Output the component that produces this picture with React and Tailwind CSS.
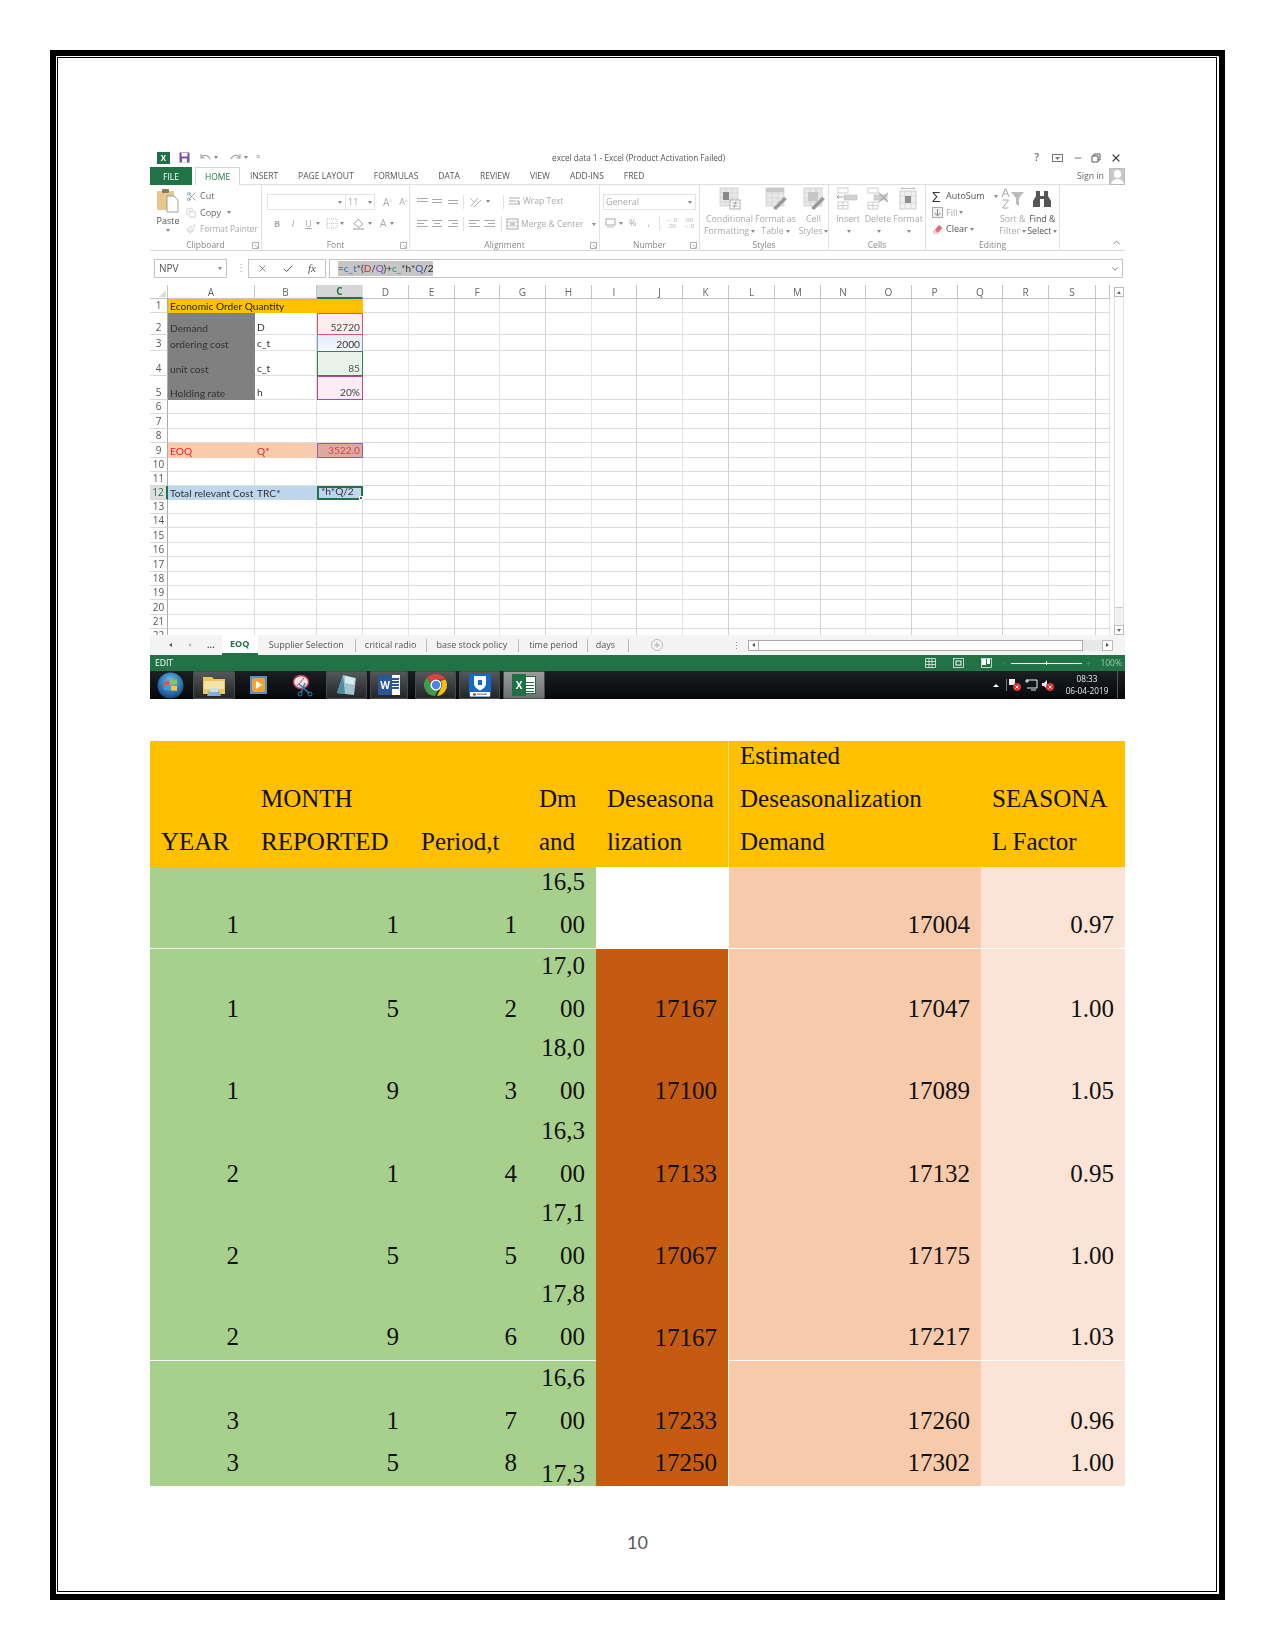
import React from "react";
import { Scissors, Copy, Paintbrush, X, Check, ChevronDown, ChevronUp, Minus, Plus } from "lucide-react";

const Caret = ({ className = "" }) => <span className={"inline-block w-0 h-0 border-x-[2.5px] border-x-transparent border-t-[3px] border-t-[#888] " + className} />;

const Launcher = () => (
  <svg width="7" height="7" viewBox="0 0 7 7" className="shrink-0"><path d="M0.5 0.5H6.5V6.5H0.5Z M3 3L6 6" fill="none" stroke="#999" strokeWidth="0.8" /></svg>
);

const Lines = ({ w = 12, rows = [12, 12, 12], color = "#aaa", align = "left" }) => (
  <svg width={w} height="10" viewBox={`0 0 ${w} 10`}>
    {rows.map((r, i) => <rect key={i} x={align === "center" ? (w - r) / 2 : align === "right" ? w - r : 0} y={1 + i * 3} width={r} height="1" fill={color} />)}
  </svg>
);

const Group = ({ w, label, launcher, children }) => (
  <div className={"flex flex-col h-[65px] border-r border-[#e2e2e2] " + w}>
    <div className="flex-1 min-h-0 relative">{children}</div>
    <div className="h-[9px] flex items-center relative">
      <div className="w-full text-center text-[8.5px] leading-none text-[#888]">{label}</div>
      {launcher && <div className="absolute right-[2px] top-[1px]"><Launcher /></div>}
    </div>
  </div>
);

const BigBtn = ({ w, icon, lines, arrow }) => (
  <div className={"flex flex-col items-center shrink-0 " + w}>
    <div className="h-[26px] flex items-center justify-center">{icon}</div>
    <div className="text-[8.8px] leading-[11.5px] mt-[2px] text-center text-[#aaa] whitespace-nowrap">{lines[0]}</div>
    <div className="text-[8.8px] leading-[11.5px] text-center text-[#aaa] whitespace-nowrap">{lines[1]}{arrow && <Caret className="ml-[2px] mb-[1px]" />}</div>
  </div>
);

const TableIcon = ({ kind }) => (
  <svg width="24" height="24" viewBox="0 0 24 24">
    <rect x="2" y="1" width="18" height="18" fill="#e9e9e9" stroke="#c8c8c8" strokeWidth="0.7" />
    <path d="M2 6H20M2 11H20M2 15H20M8 1V19M14 1V19" stroke="#d0d0d0" strokeWidth="0.7" />
    {kind === 0 && <><rect x="5" y="5" width="6" height="8" fill="#8a8a8a" /><rect x="12" y="13" width="10" height="9" fill="#fff" stroke="#999" strokeWidth="0.8" /><path d="M14 16H20M14 19H20M18 14L16 21" stroke="#888" strokeWidth="0.7" /></>}
    {kind === 1 && <><rect x="2" y="1" width="18" height="4" fill="#c8c8c8" /><path d="M9 21L20 10L23 12L12 23Z" fill="#999" /></>}
    {kind === 2 && <><rect x="6" y="5" width="10" height="9" fill="#c6c6c6" /><path d="M9 21L20 10L23 12L12 23Z" fill="#999" /></>}
  </svg>
);

const CellIcon = ({ kind }) => (
  <svg width="24" height="24" viewBox="0 0 24 24">
    {kind !== 2 && <><rect x="2" y="1" width="10" height="5" fill="none" stroke="#c2c2c2" strokeWidth="0.8" /><rect x="2" y="15" width="10" height="7" fill="none" stroke="#c2c2c2" strokeWidth="0.8" /><path d="M7 15V22M2 18.5H12" stroke="#c2c2c2" strokeWidth="0.8" /><rect x="8" y="8" width="13" height="5" fill="#d2d2d2" stroke="#bdbdbd" strokeWidth="0.6" /></>}
    {kind === 0 && <path d="M1 10H7M3 8L1 10L3 12" fill="none" stroke="#999" strokeWidth="0.9" />}
    {kind === 1 && <path d="M13 6L22 15M22 6L13 15" stroke="#aaa" strokeWidth="1.2" />}
    {kind === 2 && <><rect x="4" y="4" width="16" height="18" fill="#f1f1f1" stroke="#c2c2c2" strokeWidth="0.8" /><path d="M4 9H20M4 16H20M9 4V22M15 4V22" stroke="#cfcfcf" strokeWidth="0.7" /><rect x="9" y="9" width="6" height="7" fill="#8f8f8f" /><path d="M5 1.5H19M5 1.5L7 .5M19 1.5L17 .5" stroke="#aaa" strokeWidth="0.7" /></>}
  </svg>
);

const Ribbon = () => (
  <div className="flex h-[66px] border-b border-[#d9d9d9] font-['Open_Sans',sans-serif]">
    <Group w="w-[112px]" label="Clipboard" launcher>
      <div className="flex pt-[3px]">
        <div className="w-[36px] flex flex-col items-center">
          <svg width="24" height="25" viewBox="0 0 24 25">
            <rect x="1" y="3" width="17" height="19" rx="1" fill="#e9c98b" />
            <rect x="6" y="1" width="7" height="4" rx="1" fill="#8b7a5c" />
            <path d="M11 8H18L22 12V24H11Z" fill="#fff" stroke="#888" strokeWidth="0.8" />
          </svg>
          <div className="text-[9px] leading-[11px] text-[#555] mt-[2px]">Paste</div>
          <Caret className="mt-[3px]" />
        </div>
        <div className="flex flex-col text-[9px] leading-[16.5px] text-[#666]">
          <div className="flex items-center h-[16.5px]"><Scissors size={11} strokeWidth={1.3} color="#5b7290" className="mr-[3px]" />Cut</div>
          <div className="flex items-center h-[16.5px]"><Copy size={10} strokeWidth={1.1} color="#999" className="mr-[4px]" />Copy<Caret className="ml-[6px]" /></div>
          <div className="flex items-center h-[16.5px] text-[8.3px] text-[#aaa] whitespace-nowrap"><Paintbrush size={10} strokeWidth={1.2} color="#aaa" className="mr-[4px]" />Format Painter</div>
        </div>
      </div>
    </Group>
    <Group w="w-[148px]" label="Font" launcher>
      <div className="pl-[5px] pt-[9px] flex items-center gap-[0px]">
        <div className="w-[79px] h-[16px] border border-[#e4e4e4] flex items-center justify-end pr-[3px]"><Caret /></div>
        <div className="w-[29px] h-[16px] border border-l-0 border-[#e4e4e4] flex items-center justify-between px-[2px] text-[9px] text-[#aaa]">11<Caret /></div>
        <span className="ml-[8px] text-[10px] text-[#aaa]">A<sup className="text-[5px]">^</sup></span>
        <span className="ml-[7px] text-[9px] text-[#aaa]">A<sup className="text-[5px]">^</sup></span>
      </div>
      <div className="pl-[7px] pt-[6px] flex items-center text-[9px] text-[#aaa]">
        <b className="w-[16px] text-center">B</b>
        <i className="w-[16px] text-center">I</i>
        <u className="w-[15px] text-center">U</u>
        <Caret className="mr-[6px]" />
        <svg width="12" height="11" viewBox="0 0 12 11"><rect x="1" y="1" width="10" height="9" fill="none" stroke="#bbb" strokeDasharray="1 1" /><path d="M6 1V10M1 5.5H11" stroke="#ccc" strokeDasharray="1 1" /></svg>
        <Caret className="ml-[2px] mr-[8px]" />
        <svg width="13" height="12" viewBox="0 0 13 12"><path d="M6 1L11 6L7 9.5L2 6Z" fill="none" stroke="#aaa" /><rect x="1" y="10" width="11" height="2" fill="#ccc" /></svg>
        <Caret className="ml-[3px] mr-[8px]" />
        <span className="text-[10px]">A</span>
        <Caret className="ml-[4px]" />
      </div>
    </Group>
    <Group w="w-[190px]" label="Alignment" launcher>
      <div className="pl-[7px] pt-[9px] flex items-center">
        <Lines w={11} rows={[11, 11, 0]} />
        <div className="w-[4px]" />
        <div className="mt-[2px]"><Lines w={10} rows={[10, 10, 0]} /></div>
        <div className="w-[6px]" />
        <div className="mt-[5px]"><Lines w={10} rows={[10, 10, 0]} /></div>
        <div className="w-[1px] h-[14px] bg-[#e2e2e2] mx-[5px]" />
        <svg width="14" height="12" viewBox="0 0 14 12"><path d="M2 10L9 2M5 11L12 4" stroke="#aaa" strokeWidth="1" /><path d="M1 2L5 6" stroke="#c0c0c0" /></svg>
        <Caret className="ml-[3px]" />
        <div className="w-[1px] h-[14px] bg-[#e2e2e2] ml-[13px] mr-[4px]" />
        <svg width="13" height="12" viewBox="0 0 13 12"><path d="M1 2H12M1 5H8M1 8H12" stroke="#aaa" /><path d="M9 5H11V8" fill="none" stroke="#999" /></svg>
        <span className="ml-[2px] text-[8.5px] text-[#aaa]">Wrap Text</span>
      </div>
      <div className="pl-[7px] pt-[8px] flex items-center">
        <Lines w={11} rows={[11, 7, 11]} />
        <div className="w-[4px]" />
        <Lines w={10} rows={[10, 6, 10]} align="center" />
        <div className="w-[6px]" />
        <Lines w={10} rows={[10, 6, 10]} align="right" />
        <div className="w-[1px] h-[14px] bg-[#e2e2e2] mx-[5px]" />
        <Lines w={11} rows={[11, 7, 11]} />
        <div className="w-[4px]" />
        <Lines w={11} rows={[11, 7, 11]} align="right" />
        <div className="w-[1px] h-[14px] bg-[#e2e2e2] ml-[6px] mr-[4px]" />
        <svg width="13" height="12" viewBox="0 0 13 12"><rect x="1" y="1" width="11" height="10" fill="none" stroke="#aaa" /><path d="M1 4H12M1 8H12" stroke="#bbb" /><path d="M4 6H9" stroke="#888" /></svg>
        <span className="ml-[2px] text-[8.5px] text-[#aaa] whitespace-nowrap">Merge &amp; Center</span>
        <Caret className="ml-[8px]" />
      </div>
    </Group>
    <Group w="w-[100px]" label="Number" launcher>
      <div className="pl-[3px] pt-[9px]">
        <div className="w-[93px] h-[16px] border border-[#e4e4e4] flex items-center justify-between pl-[2px] pr-[3px] text-[9px] text-[#aaa]">General<Caret /></div>
      </div>
      <div className="pl-[5px] pt-[6px] flex items-center text-[9px] text-[#aaa]">
        <svg width="11" height="11" viewBox="0 0 11 11"><rect x="1" y="1" width="9" height="6" fill="none" stroke="#aaa" /><path d="M2 9H9" stroke="#bbb" /></svg>
        <Caret className="ml-[3px] mr-[6px]" />
        <span>%</span>
        <span className="ml-[11px]">,</span>
        <div className="w-[1px] h-[14px] bg-[#e2e2e2] ml-[9px] mr-[5px]" />
        <span className="text-[6px] leading-[6px] w-[14px] text-center">←.0<br />.00</span>
        <span className="text-[6px] leading-[6px] w-[14px] text-center ml-[3px]">.00<br />→.0</span>
      </div>
    </Group>
    <Group w="w-[129px]" label="Styles">
      <div className="flex pl-[6px] pt-[1px]">
        <BigBtn w="w-[47px]" icon={<TableIcon kind={0} />} lines={["Conditional", "Formatting"]} arrow />
        <BigBtn w="w-[45px]" icon={<TableIcon kind={1} />} lines={["Format as", "Table"]} arrow />
        <BigBtn w="w-[31px]" icon={<TableIcon kind={2} />} lines={["Cell", "Styles"]} arrow />
      </div>
    </Group>
    <Group w="w-[97px]" label="Cells">
      <div className="flex pl-[4px] pt-[1px]">
        <BigBtn w="w-[30px]" icon={<CellIcon kind={0} />} lines={["Insert", ""]} arrow />
        <BigBtn w="w-[30px]" icon={<CellIcon kind={1} />} lines={["Delete", ""]} arrow />
        <BigBtn w="w-[30px]" icon={<CellIcon kind={2} />} lines={["Format", ""]} arrow />
      </div>
    </Group>
    <Group w="w-[134px]" label="Editing">
      <div className="flex pl-[6px] pt-[3px]">
        <div className="w-[69px] flex flex-col text-[9px] leading-[16.5px]">
          <div className="flex items-center h-[16.5px] text-[#555]"><span className="w-[14px] text-[15px] leading-none text-[#333]">Σ</span>AutoSum<Caret className="ml-[9px]" /></div>
          <div className="flex items-center h-[16.5px] text-[#aaa]"><span className="w-[14px]"><svg width="11" height="11" viewBox="0 0 11 11"><rect x="0.5" y="0.5" width="10" height="10" fill="#eee" stroke="#aaa" /><path d="M5.5 2V8M3 6L5.5 9L8 6" fill="none" stroke="#888" /></svg></span>Fill<Caret className="ml-[2px]" /></div>
          <div className="flex items-center h-[16.5px] text-[#555]"><span className="w-[14px]"><svg width="11" height="11" viewBox="0 0 11 11"><path d="M1 8L7 1L10.5 4L5 10H2Z" fill="#e8697a" /><path d="M1 8L3 6L6 9L5 10H2Z" fill="#f4d0d4" /></svg></span>Clear<Caret className="ml-[2px]" /></div>
        </div>
        <div className="flex flex-col items-center w-[26px] -mt-[2px]">
          <div className="h-[25px] flex items-center">
            <svg width="24" height="22" viewBox="0 0 24 22"><path d="M1 9L4 1H5L8 9M2.2 6H6.8M1.5 12H7.5L1.5 20H7.5" fill="none" stroke="#aaa" strokeWidth="1" /><path d="M10 4H23L18 10V18L15 16V10Z" fill="#bbb" /></svg>
          </div>
          <div className="text-[8.8px] leading-[11.5px] text-[#aaa] whitespace-nowrap mt-[3px]">Sort &amp;</div>
          <div className="text-[8.8px] leading-[11.5px] text-[#aaa] whitespace-nowrap">Filter<Caret className="ml-[2px] mb-[1px]" /></div>
        </div>
        <div className="flex flex-col items-center w-[34px] -mt-[2px]">
          <div className="h-[25px] flex items-center">
            <svg width="20" height="18" viewBox="0 0 20 18"><path d="M4 1H8V6H12V1H16V6L19 11V17H12V9H8V17H1V11L4 6Z" fill="#555" /></svg>
          </div>
          <div className="text-[8.8px] leading-[11.5px] text-[#555] whitespace-nowrap mt-[3px]">Find &amp;</div>
          <div className="text-[8.8px] leading-[11.5px] text-[#555] whitespace-nowrap">Select<Caret className="ml-[2px] mb-[1px] border-t-[#555]" /></div>
        </div>
      </div>
    </Group>
    <div className="flex-1 flex items-end justify-end pr-[3px] pb-[2px]"><ChevronUp size={11} color="#777" strokeWidth={2} /></div>
  </div>
);

const colLetters = ["A", "B", "C", "D", "E", "F", "G", "H", "I", "J", "K", "L", "M", "N", "O", "P", "Q", "R", "S", ""];

const rowHeights = [14, 22, 16, 25, 24, 14, 15, 14, 15, 14, 14, 14, 14, 14.4, 14.4, 14.4, 14.4, 14.4, 14.4, 14.4, 14.4, 7];

const cellStyles = {
  "2A": "bg-[#808080]", "3A": "bg-[#808080]", "4A": "bg-[#808080]", "5A": "bg-[#808080]",
  "2C": "bg-[#fcecec] border border-[#cf5a72] justify-end text-[#444]",
  "3C": "bg-gradient-to-b from-[#e3ecf8] to-[#f5f8fc] border-x border-[#6f9fd8] justify-end text-[#333]",
  "4C": "bg-[#e9f2e9] border border-[#2f8452] justify-end text-[#555]",
  "5C": "bg-[#fbecf3] border border-[#b14a8e] justify-end text-[#444]",
  "9A": "bg-[#f8cbad] text-[#e8202a]", "9B": "bg-[#f8cbad] text-[#e8202a]",
  "9C": "bg-[#dcaaa0] border border-[#8a62b4] justify-end text-[#e0404a]",
  "12A": "bg-[#bdd7ee] whitespace-nowrap", "12B": "bg-[#bdd7ee]",
  "12C": "bg-[#bdd7ee] border-2 border-[#217346] items-center",
};
const cellText = {
  "2A": "Demand", "2B": "D", "2C": "52720", "3A": "ordering cost", "3B": "c_t", "3C": "2000",
  "4A": "unit cost", "4B": "c_t", "4C": "85", "5A": "Holding rate", "5B": "h", "5C": "20%",
  "9A": "EOQ", "9B": "Q*", "9C": "3522.0", "12A": "Total relevant Cost", "12B": "TRC*", "12C": "*h*Q/2",
};

const Sheet = () => (
  <div className="w-[961px] h-[350px] overflow-hidden grid content-start grid-cols-[18px_87px_62px_46px_46px_46px_45px_46px_46px_45px_46px_46px_46px_46px_45px_46px_46px_45px_46px_47px_14px] font-['Lato',sans-serif] text-[10.2px] text-[#333]">
    <div className="h-[14px] border-b border-r border-[#c4c4c4] flex items-end justify-end pr-[1px] pb-[1px]">
      <div className="w-0 h-0 border-l-[7px] border-l-transparent border-b-[7px] border-b-[#dcdcdc]" />
    </div>
    {colLetters.map((c, i) => (
      <div key={i} className={"h-[14px] flex items-center justify-center border-r border-b text-[10px] leading-none font-['Open_Sans',sans-serif] " + (c === "C" ? "bg-[#d6d6d6] border-b-[#217346] border-b-2 text-[#217346] font-bold border-r-[#e0e0e0]" : "border-[#c4c4c4] text-[#666]")}>{c}</div>
    ))}
    {rowHeights.map((h, ri) => {
      const r = ri + 1;
      const heightClass = {
        14: "h-[14px]", 22: "h-[22px]", 16: "h-[16px]", 25: "h-[25px]", 24: "h-[24px]", 15: "h-[15px]", 14.4: "h-[14.4px]", 7: "h-[7px]",
      }[h];
      return (
        <React.Fragment key={r}>
          <div className={"flex justify-center border-r border-[#aaa] border-b text-[10px] leading-[13px] font-['Open_Sans',sans-serif] overflow-hidden " + (r === 22 ? "items-start " : "items-end ") + heightClass + " " + (r === 12 ? "bg-[#dedede] text-[#217346] border-r-[#217346] border-r-2 border-b-[#d8d8d8]" : "border-b-[#d8d8d8] text-[#555]")}>{r}</div>
          {r === 1 ? (
            <div className={"col-span-3 bg-[#ffc000] flex items-end pl-[2px] leading-[13px] text-[#222] whitespace-nowrap " + heightClass}>Economic Order Quantity</div>
          ) : (
            ["A", "B", "C"].map((c) => {
              const k = r + c;
              return <div key={k} className={"relative flex items-end px-[2px] leading-[13px] overflow-visible " + heightClass + " " + (cellStyles[k] || "border-r border-b border-[#dedede]")}>
                {cellText[k]}
                {k === "12C" && <span className="absolute -right-[2px] -bottom-[2px] w-[4px] h-[4px] bg-[#217346] border border-white" />}
              </div>;
            })
          )}
          {colLetters.slice(3).map((c, ci) => (
            <div key={ci} className={"border-r border-b " + heightClass + " " + (ci % 2 === 1 ? "border-r-[#d2d2d2] border-b-[#dcdcdc]" : "border-r-[#e4e4e4] border-b-[#dcdcdc]")} />
          ))}
        </React.Fragment>
      );
    })}
  </div>
);

const TaskBtn = ({ w, ml, light, children }) => (
  <div className={"h-[28px] flex items-center justify-center shrink-0 rounded-[1px] border border-[#4a4a4a] " + w + " " + ml + " " + (light ? "bg-gradient-to-b from-[#9a9c9c] to-[#6d6f70]" : "bg-gradient-to-b from-[#55585a] to-[#232528]")}>{children}</div>
);

const Taskbar = () => (
  <div className="h-[28px] flex items-center bg-gradient-to-b from-[#1d2022] to-[#05080b]">
    <div className="w-[40px] h-[28px] flex items-center justify-center shrink-0">
      <svg width="27" height="27" viewBox="0 0 27 27">
        <defs><radialGradient id="orb" cx="50%" cy="35%" r="70%"><stop offset="0" stopColor="#7fc1ea" /><stop offset="0.6" stopColor="#2a73b5" /><stop offset="1" stopColor="#123a68" /></radialGradient></defs>
        <circle cx="13.5" cy="13.5" r="13" fill="url(#orb)" />
        <path d="M7 9.5L12.5 8.5V12.7L7 13.2Z" fill="#e2553d" /><path d="M14 8.3L20 7.5V12.3L14 12.7Z" fill="#8ec641" /><path d="M7 14.5L12.5 14V18.5L7 17.8Z" fill="#3f9be0" /><path d="M14 14L20 13.7V18.8L14 18.5Z" fill="#f8c73c" />
      </svg>
    </div>
    <TaskBtn w="w-[42px]" ml="ml-[3px]">
      <svg width="26" height="23" viewBox="0 0 26 23"><path d="M2 3H11L13 5H24V20H2Z" fill="#e8c860" /><rect x="3" y="7" width="20" height="8" fill="#f4e3a4" /><path d="M8 17H18L20 22H6Z" fill="#7fb2d6" /><rect x="9" y="14" width="8" height="4" fill="#c9dfee" /></svg>
    </TaskBtn>
    <div className="w-[46px] flex justify-center shrink-0">
      <svg width="19" height="20" viewBox="0 0 19 20"><rect x="1" y="1" width="17" height="18" fill="#5a8fc4" /><rect x="3" y="3" width="13" height="14" rx="2" fill="#f1a33a" /><path d="M7 6L13 10L7 14Z" fill="#fff" /></svg>
    </div>
    <div className="w-[44px] flex justify-center shrink-0">
      <svg width="22" height="23" viewBox="0 0 22 23"><ellipse cx="9" cy="8" rx="7.5" ry="6.5" fill="#f0e8e8" stroke="#c33b52" strokeWidth="1.4" /><path d="M5 12L12 4" stroke="#c33b52" strokeWidth="1" /><path d="M7 10L17 19M13 9L9 19" stroke="#2f7fb4" strokeWidth="1.6" /><circle cx="18" cy="20" r="2" fill="none" stroke="#2f7fb4" /><circle cx="8" cy="20" r="2" fill="none" stroke="#2f7fb4" /></svg>
    </div>
    <TaskBtn w="w-[41px]" ml="ml-[1px]">
      <svg width="26" height="24" viewBox="0 0 26 24"><path d="M9 2L22 5L20 22L3 20Z" fill="#9ec5d0" /><path d="M9 2L3 20L11 21Z" fill="#4d8ea0" /><path d="M11 3L21 5.5L20 12L11 10Z" fill="#d9eaee" /></svg>
    </TaskBtn>
    <TaskBtn w="w-[38px]" ml="ml-[3px]">
      <div className="relative w-[22px] h-[20px]">
        <div className="absolute right-0 top-0 w-[11px] h-[20px] bg-white flex flex-col gap-[1.5px] p-[1.5px] pt-[3px]">
          <div className="h-[1.5px] bg-[#2b579a]" /><div className="h-[1.5px] bg-[#2b579a]" /><div className="h-[1.5px] bg-[#2b579a]" /><div className="h-[1.5px] bg-[#2b579a]" />
        </div>
        <div className="absolute left-0 top-0 w-[14px] h-[20px] bg-[#2b579a] text-white text-[10px] font-bold leading-[20px] text-center font-['Open_Sans',sans-serif]">W</div>
      </div>
    </TaskBtn>
    <TaskBtn w="w-[41px]" ml="ml-[7px]">
      <svg width="24" height="24" viewBox="0 0 24 24">
        <path d="M12 1A11 11 0 0 1 21.5 6.5H12A5.5 5.5 0 0 0 6.8 10L3 4.5A11 11 0 0 1 12 1Z" fill="#db4437" />
        <path d="M21.5 6.5A11 11 0 0 1 13 23L17 15A5.5 5.5 0 0 0 16.5 8Z" fill="#f4c20d" />
        <path d="M3 4.5L8 13A5.5 5.5 0 0 0 14 17L11 23A11 11 0 0 1 3 4.5Z" fill="#3f9c4b" />
        <circle cx="12" cy="12" r="5.5" fill="#fff" /><circle cx="12" cy="12" r="4.2" fill="#4a84e8" />
      </svg>
    </TaskBtn>
    <TaskBtn w="w-[41px]" ml="ml-[3px]">
      <svg width="24" height="25" viewBox="0 0 24 25"><rect x="1" y="1" width="22" height="23" rx="3" fill="#1569c7" /><path d="M6 3H18V10C18 14 15 16 12 17.5C9 16 6 14 6 10Z" fill="#fff" /><rect x="10" y="7" width="4" height="5" fill="#1569c7" /><rect x="2" y="19" width="20" height="4.5" fill="#fff" /><rect x="5" y="20.5" width="3" height="2" fill="#c62828" /><rect x="9" y="20.5" width="10" height="1.5" fill="#999" /></svg>
    </TaskBtn>
    <TaskBtn w="w-[42px]" ml="ml-[3px]" light>
      <div className="relative w-[24px] h-[22px]">
        <div className="absolute right-0 top-[2px] w-[12px] h-[18px] bg-white border border-[#1e6b3f]" >
          <div className="mt-[3px] h-[12px] mx-[1px] bg-[repeating-linear-gradient(0deg,#1e6b3f_0,#1e6b3f_1px,transparent_1px,transparent_3px)]" />
        </div>
        <div className="absolute left-0 top-0 w-[14px] h-[22px] bg-[#1e7145] text-white text-[10px] font-bold leading-[22px] text-center font-['Open_Sans',sans-serif]">X</div>
      </div>
    </TaskBtn>
    <div className="flex-1" />
    <div className="w-0 h-0 border-x-[3px] border-x-transparent border-b-[3px] border-b-white mr-[7px]" />
    <div className="w-[1px] h-[12px] bg-[#777] mr-[1px]" />
    <svg width="14" height="14" viewBox="0 0 14 14" className="mr-[2px]"><rect x="1" y="1" width="6" height="6" fill="#eee" /><circle cx="9" cy="9" r="4" fill="#d9352f" /><path d="M7.5 7.5L10.5 10.5M10.5 7.5L7.5 10.5" stroke="#fff" /></svg>
    <svg width="14" height="14" viewBox="0 0 14 14" className="mr-[3px]"><path d="M3 2H13V10H3M3 1V5M1 3H5M7 12H12" fill="none" stroke="#eee" /></svg>
    <svg width="14" height="14" viewBox="0 0 14 14" className="mr-[10px]"><path d="M1 5H3L6 2V11L3 8H1Z" fill="#eee" /><circle cx="9" cy="9" r="4" fill="#d9352f" /><path d="M7.5 7.5L10.5 10.5M10.5 7.5L7.5 10.5" stroke="#fff" /></svg>
    <div className="w-[44px] flex flex-col items-center text-[8.2px] leading-[12.5px] text-[#e8e8e8] font-['Open_Sans',sans-serif] whitespace-nowrap mr-[8px]">
      <div>08:33</div><div>06-04-2019</div>
    </div>
    <div className="w-[1px] h-[28px] bg-[#555] mr-[7px]" />
  </div>
);

const Excel = () => (
  <div className="w-[975px] h-[551px] overflow-hidden blur-[0.4px] font-['Open_Sans',sans-serif] bg-white">
    {/* title bar */}
    <div className="h-[19px] flex items-center text-[#666] relative">
      <div className="ml-[7px] w-[13px] h-[12px] bg-[#1e7145] text-white text-[8px] font-bold leading-[12px] text-center">X</div>
      <svg width="11" height="11" viewBox="0 0 11 11" className="ml-[9px]"><rect x="0.5" y="0.5" width="10" height="10" fill="#7b4f99" /><rect x="2.5" y="1" width="6" height="3.5" fill="#fff" /><rect x="3" y="6.5" width="5" height="4" fill="#fff" /></svg>
      <svg width="11" height="11" viewBox="0 0 11 11" className="ml-[10px]"><path d="M1 2V6H5M1.5 5.5C3 2.5 8 2.5 10 7" fill="none" stroke="#aaa" strokeWidth="1.2" /></svg>
      <Caret className="ml-[3px]" />
      <svg width="11" height="11" viewBox="0 0 11 11" className="ml-[12px]"><path d="M10 2V6H6M9.5 5.5C8 2.5 3 2.5 1 7" fill="none" stroke="#aaa" strokeWidth="1.2" /></svg>
      <Caret className="ml-[3px]" />
      <div className="ml-[8px] text-[7px] text-[#888]">≡</div>
      <div className="ml-[292px] mt-[2px] text-[8.2px] leading-none whitespace-nowrap text-[#555]">excel data 1 - Excel (Product Activation Failed)</div>
      <div className="flex-1" />
      <div className="text-[10px] font-semibold text-[#666] mr-[13px]">?</div>
      <svg width="11" height="8" viewBox="0 0 11 8" className="mr-[10px]"><rect x="0.5" y="0.5" width="10" height="7" fill="none" stroke="#777" /><path d="M3 3H8L5.5 6Z" fill="#777" /></svg>
      <Minus size={10} color="#555" className="mr-[8px]" />
      <svg width="10" height="10" viewBox="0 0 10 10" className="mr-[9px]"><path d="M3 3V1H9V7H7M1 3H7V9H1Z" fill="none" stroke="#555" /></svg>
      <X size={12} strokeWidth={2.4} color="#444" className="mr-[3px]" />
    </div>
    {/* tabs */}
    <div className="h-[18px] flex items-end text-[8.5px] text-[#555] relative">
      <div className="w-[42px] h-[18px] bg-[#217346] text-white flex items-center justify-center shrink-0 pt-[2px]">FILE</div>
      <div className="ml-[3px] w-[45px] h-[18px] border-x border-t border-[#d5d5d5] text-[#217346] flex items-center justify-center shrink-0 bg-white pt-[1px]">HOME</div>
      <div className="flex-1 h-[18px] border-b border-[#dedede] flex items-center whitespace-nowrap pt-[2px]">
        <span className="ml-[10px]">INSERT</span>
        <span className="ml-[20px]">PAGE LAYOUT</span>
        <span className="ml-[20px]">FORMULAS</span>
        <span className="ml-[20px]">DATA</span>
        <span className="ml-[20px]">REVIEW</span>
        <span className="ml-[20px]">VIEW</span>
        <span className="ml-[20px]">ADD-INS</span>
        <span className="ml-[20px]">FRED</span>
        <span className="ml-auto mr-[5px] text-[8.8px] text-[#666]">Sign in</span>
        <div className="w-[16px] h-[17px] bg-[#c8c8c8] border border-[#bbb] overflow-hidden relative">
          <div className="absolute left-[4px] top-[1px] w-[7px] h-[8px] rounded-full bg-white" />
          <div className="absolute left-[1px] top-[10px] w-[13px] h-[8px] rounded-t-md bg-white" />
        </div>
      </div>
    </div>
    <Ribbon />
    {/* formula bar */}
    <div className="h-[34px] pt-[8px] flex text-[10px] text-[#555]">
      <div className="ml-[4px] w-[73px] h-[19px] border border-[#c4c4c4] flex items-center justify-between pl-[4px] pr-[4px] shrink-0">NPV<Caret className="border-t-[#555]" /></div>
      <div className="ml-[7px] w-[14px] text-center text-[#aaa] leading-[17px]">⋮</div>
      <div className="w-[78px] h-[19px] border border-[#c4c4c4] flex items-center pl-[8px] gap-[14px] shrink-0">
        <X size={11} color="#666" strokeWidth={1.6} />
        <Check size={12} color="#666" strokeWidth={2} />
        <i className="font-['Liberation_Serif',serif] text-[11px] text-[#555]">fx</i>
      </div>
      <div className="ml-[3px] w-[794px] h-[19px] border border-[#c4c4c4] flex items-center pl-[8px] pr-[2px] text-[10px] font-['Lato',sans-serif]">
        <span className="bg-[#c6c6c6] h-[15px] leading-[15px] whitespace-nowrap"><span className="text-[#333]">=</span><span className="text-[#2a78b8]">c_t</span><span className="text-[#333]">*(</span><span className="text-[#c03030]">D</span><span className="text-[#333]">/</span><span className="text-[#7a4ab0]">Q</span><span className="text-[#333]">)+</span><span className="text-[#2a9060]">c_</span><span className="text-[#333]">*h*</span><span className="text-[#2a58b8]">Q</span><span className="text-[#222]">/2</span></span>
        <ChevronDown size={10} color="#666" strokeWidth={2} className="ml-auto" />
      </div>
    </div>
    {/* sheet + scrollbar */}
    <div className="flex h-[350px]">
      <Sheet />
      <div className="ml-[3px] w-[10px] flex flex-col">
        <div className="h-[2px]" />
        <div className="h-[10px] border border-[#bbb] flex items-center justify-center"><div className="w-0 h-0 border-x-[2.5px] border-x-transparent border-b-[3px] border-b-[#666]" /></div>
        <div className="flex-1 border-x border-[#e0e0e0] bg-[#f1f1f1]"><div className="h-[311px] bg-white border-b border-[#ccc]" /></div>
        <div className="h-[10px] border border-[#bbb] flex items-center justify-center"><div className="w-0 h-0 border-x-[2.5px] border-x-transparent border-t-[3px] border-t-[#666]" /></div>
      </div>
    </div>
    {/* sheet tabs */}
    <div className="h-[20px] bg-[#f4f4f4] flex items-center text-[9px] text-[#555] whitespace-nowrap">
      <div className="w-[582px] shrink-0 flex items-center">
        <div className="ml-[19px] w-0 h-0 border-y-[2.5px] border-y-transparent border-r-[3px] border-r-[#555]" />
        <div className="ml-[17px] w-0 h-0 border-y-[2.5px] border-y-transparent border-l-[3px] border-l-[#bbb]" />
        <span className="ml-[15px] font-bold">...</span>
        <div className="ml-[7px] w-[36px] h-[20px] bg-white text-[#217346] font-bold border-b-2 border-[#217346] flex items-center justify-center -mt-[1px]">EOQ</div>
        <span className="ml-[11px]">Supplier Selection</span>
        <div className="w-[1px] h-[13px] bg-[#bbb] ml-[11px] mr-[9px]" />
        <span>critical radio</span>
        <div className="w-[1px] h-[13px] bg-[#bbb] ml-[10px] mr-[9px]" />
        <span>base stock policy</span>
        <div className="w-[1px] h-[13px] bg-[#bbb] ml-[11px] mr-[10px]" />
        <span>time period</span>
        <div className="w-[1px] h-[13px] bg-[#bbb] ml-[9px] mr-[8px]" />
        <span>days</span>
        <div className="w-[1px] h-[13px] bg-[#bbb] ml-[13px]" />
        <div className="ml-[22px] w-[12px] h-[12px] rounded-full border border-[#bbb] flex items-center justify-center"><Plus size={8} color="#aaa" strokeWidth={3} /></div>
      </div>
      <span className="text-[#888] leading-none">⋮</span>
      <div className="ml-[7px] w-[11px] h-[11px] border border-[#aaa] flex items-center justify-center bg-white"><div className="w-0 h-0 border-y-[2.5px] border-y-transparent border-r-[3px] border-r-[#555]" /></div>
      <div className="w-[324px] h-[11px] border-y border-r border-[#aaa] bg-white" />
      <div className="w-[19px] h-[11px] bg-[#e8e8e8]" />
      <div className="w-[11px] h-[11px] border border-[#bbb] flex items-center justify-center bg-white"><div className="w-0 h-0 border-y-[2.5px] border-y-transparent border-l-[3px] border-l-[#555]" /></div>
    </div>
    {/* status bar */}
    <div className="h-[16px] bg-[#217346] flex items-center text-[8.5px] text-white">
      <span className="ml-[5px]">EDIT</span>
      <div className="flex-1" />
      <svg width="11" height="10" viewBox="0 0 11 10" className="mr-[17px]"><path d="M.5 .5H10.5V9.5H.5ZM.5 3.5H10.5M.5 6.5H10.5M4 .5V9.5M7 .5V9.5" fill="none" stroke="#fff" strokeWidth="0.7" /></svg>
      <svg width="11" height="10" viewBox="0 0 11 10" className="mr-[17px]"><rect x=".5" y=".5" width="10" height="9" fill="none" stroke="#fff" strokeWidth="0.7" /><rect x="3" y="3" width="5" height="4" fill="none" stroke="#fff" /></svg>
      <svg width="11" height="10" viewBox="0 0 11 10" className="mr-[9px]"><rect x=".5" y=".5" width="10" height="9" fill="none" stroke="#fff" strokeWidth="0.7" /><rect x="1" y="1" width="4" height="6" fill="#fff" /><rect x="6" y="1" width="3" height="5" fill="#fff" /></svg>
      <Minus size={6} color="#4f9a70" className="mr-[4px]" />
      <div className="w-[71px] h-[1px] bg-white relative"><div className="absolute left-[35px] -top-[1.5px] w-[1px] h-[4px] bg-white" /></div>
      <Plus size={7} color="#4f9a70" className="ml-[3px]" />
      <span className="ml-[8px] mr-[3px] text-[#9cc7af]">100%</span>
    </div>
    <Taskbar />
  </div>
);

const rows = [
  [1, 1, 1, "16,5", "00", "", 17004, "0.97"],
  [1, 5, 2, "17,0", "00", 17167, 17047, "1.00"],
  [1, 9, 3, "18,0", "00", 17100, 17089, "1.05"],
  [2, 1, 4, "16,3", "00", 17133, 17132, "0.95"],
  [2, 5, 5, "17,1", "00", 17067, 17175, "1.00"],
  [2, 9, 6, "17,8", "00", 17167, 17217, "1.03"],
  [3, 1, 7, "16,6", "00", 17233, 17260, "0.96"],
  [3, 5, 8, "17,3", "", 17250, 17302, "1.00"],
];

const Head = ({ lines, border }) => (
  <div className={"flex flex-col justify-end pb-[4px] pl-[11px] bg-[#ffc000] whitespace-nowrap " + (border ? "border-l border-[#ffe08a]" : "")}>
    {lines.map((l, i) => <div key={i}>{l}</div>)}
  </div>
);

const DataTable = () => (
  <div className="mt-[42px] w-[975px] grid grid-cols-[100px_160px_118px_68px_132px_253px_144px] grid-rows-[126px_repeat(7,82.4px)_42px] font-['Liberation_Serif',serif] text-[25px] leading-[43px] text-[#111]">
    <Head lines={["YEAR"]} />
    <Head lines={["MONTH", "REPORTED"]} />
    <Head lines={["Period,t"]} />
    <Head lines={["Dm", "and"]} />
    <Head lines={["Deseasona", "lization"]} />
    <Head lines={["Estimated", "Deseasonalization", "Demand"]} border />
    <Head lines={["SEASONA", "L Factor"]} />
    {rows.map((r, i) => {
      const last = i === 7;
      const line = i === 0 || i === 5 ? "border-b border-white " : "";
      const cell = "flex flex-col justify-end items-end px-[11px] pb-[2px] ";
      return (
        <React.Fragment key={i}>
          <div className={cell + line + "bg-[#a8d08d]"}>{r[0]}</div>
          <div className={cell + line + "bg-[#a8d08d]"}>{r[1]}</div>
          <div className={cell + line + "bg-[#a8d08d]"}>{r[2]}</div>
          <div className={cell + line + "bg-[#a8d08d] whitespace-nowrap"}>
            {last ? <div className="-mb-[11px]">{r[3]}</div> : <><div>{r[3]}</div><div>{r[4]}</div></>}
          </div>
          <div className={cell + (i === 0 ? "bg-white" : "bg-[#c55a11]")}>{r[5]}</div>
          <div className={cell + line + "bg-[#f7caac] border-l border-l-white"}>{r[6]}</div>
          <div className={cell + line + "bg-[#fbe4d5]"}>{r[7]}</div>
        </React.Fragment>
      );
    })}
  </div>
);

export default function App() {
  return (
    <div className="w-[1275px] h-[1650px] bg-white pt-[50px] pl-[50px]">
      <div className="w-[1175px] h-[1550px] border-[6px] border-black bg-white pt-[1px] pl-[1px] pr-[2px] pb-[2px]">
        <div className="h-full border border-black pl-[92px] pt-[90px]">
          <Excel />
          <DataTable />
          <div className="w-[975px] mt-[45px] text-center font-['Lato',sans-serif] text-[18px] leading-[22px] text-[#595959]">10</div>
        </div>
      </div>
    </div>
  );
}
